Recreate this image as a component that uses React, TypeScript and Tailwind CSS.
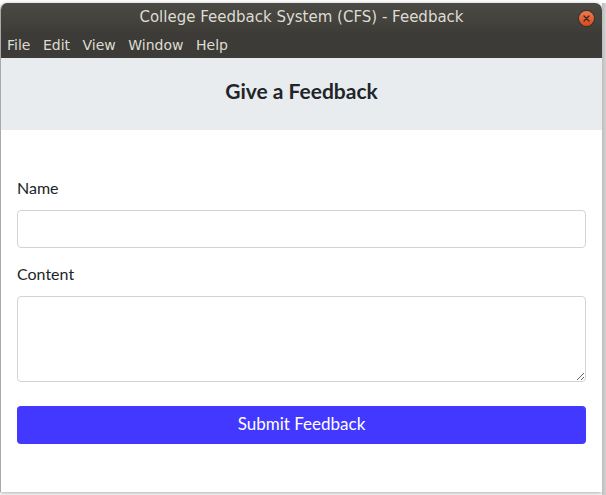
import React from 'react';

export default function App() {
  return (
    <div className="relative flex h-[495px] w-[606px] overflow-hidden bg-white pt-[3px]">
      <div className="flex h-[489px] w-[602px] flex-col overflow-hidden rounded-t-[7px] border-l border-[#a9a9a9] bg-white shadow-[0_1px_4px_rgba(0,0,0,0.35)]">
        {/* title bar */}
        <div className="relative flex h-[29px] items-center justify-center bg-gradient-to-b from-[#4b4a44] to-[#3e3d38] pb-[1px] font-['DejaVu_Sans',sans-serif] text-[15px] text-[#dfdbd2]">
          College Feedback System (CFS) - Feedback
          <div className="absolute right-[8px] top-[8px] flex h-[15px] w-[15px] items-center justify-center rounded-full bg-gradient-to-b from-[#f07a4b] to-[#d9481c] shadow-[0_0_0_1px_rgba(0,0,0,0.25)]">
            <svg width="7" height="7" viewBox="0 0 7 7">
              <path d="M1 1L6 6M6 1L1 6" stroke="#3a2a22" strokeWidth="1.4" strokeLinecap="round" />
            </svg>
          </div>
        </div>
        {/* menu bar */}
        <div className="flex h-[26px] items-center gap-[12.5px] bg-[#3c3b37] pl-[6px] font-['DejaVu_Sans',sans-serif] text-[14px] text-[#dfdbd2]">
          <span>File</span>
          <span>Edit</span>
          <span>View</span>
          <span>Window</span>
          <span>Help</span>
        </div>
        {/* content */}
        <div className="flex flex-1 flex-col font-['Lato',sans-serif] text-[#212529]">
          <div className="flex h-[72px] items-center justify-center bg-[#e9ecef] pb-[6px] text-[21px] font-bold">
            Give a Feedback
          </div>
          <div className="flex flex-col px-[16px] pt-[48px]">
            <label className="text-[16px] leading-[20px]">Name</label>
            <input className="mt-[12px] h-[38px] w-full rounded-[4px] border border-[#ced4da] bg-white px-3 outline-none" />
            <label className="mt-[16px] text-[16px] leading-[20px]">Content</label>
            <textarea className="mt-[12px] h-[86px] w-full rounded-[4px] border border-[#ced4da] bg-white px-3 outline-none" />
            <button className="mt-[24px] h-[38px] w-full rounded-[4px] bg-[#4338ff] pb-[3px] text-[17px] text-white">
              Submit Feedback
            </button>
          </div>
        </div>
      </div>
      <div className="w-[4px] bg-gradient-to-r from-[#bdbdbd] to-[#d2d2d2]" />
    </div>
  );
}
